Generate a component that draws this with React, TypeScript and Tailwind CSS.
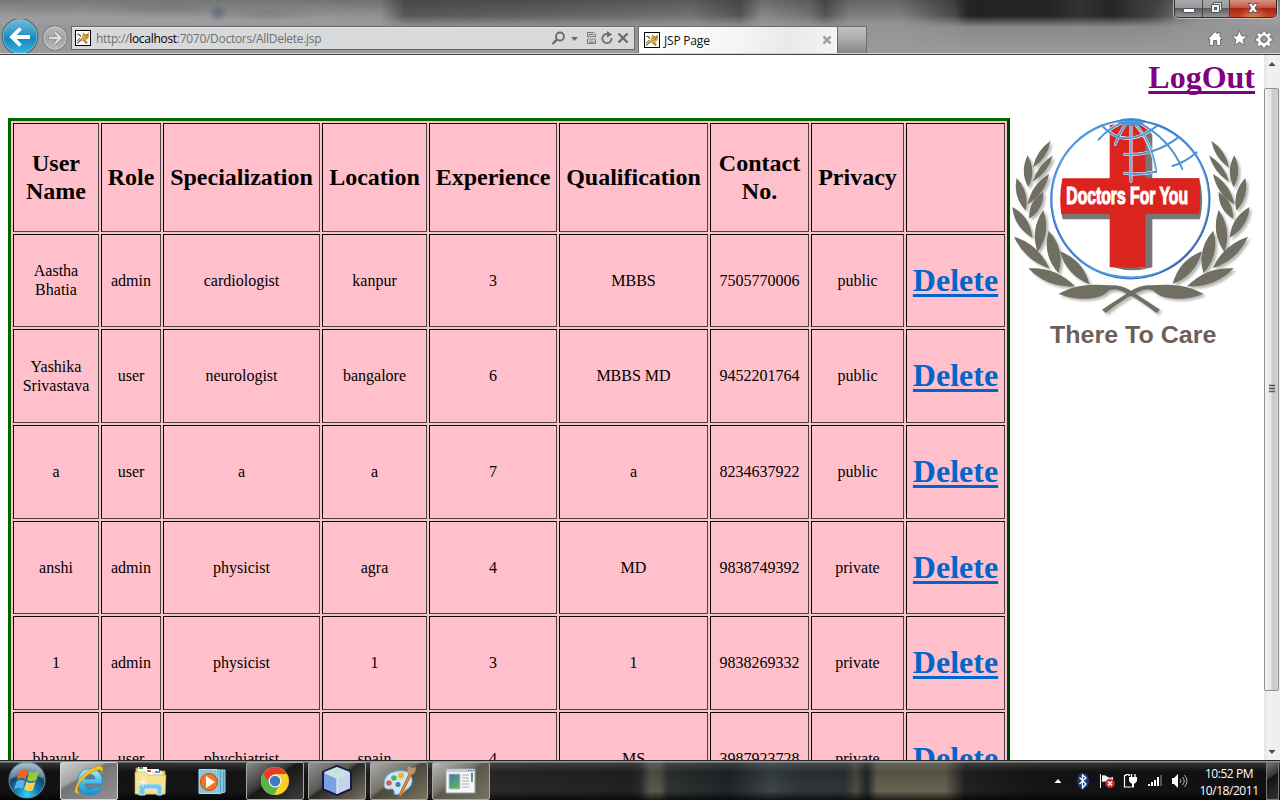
import React from "react";

const headers = ["User Name", "Role", "Specialization", "Location", "Experience", "Qualification", "Contact No.", "Privacy", ""];

const rows = [
  ["Aastha Bhatia", "admin", "cardiologist", "kanpur", "3", "MBBS", "7505770006", "public"],
  ["Yashika Srivastava", "user", "neurologist", "bangalore", "6", "MBBS MD", "9452201764", "public"],
  ["a", "user", "a", "a", "7", "a", "8234637922", "public"],
  ["anshi", "admin", "physicist", "agra", "4", "MD", "9838749392", "private"],
  ["1", "admin", "physicist", "1", "3", "1", "9838269332", "private"],
  ["bhavuk", "user", "phychiatrist", "spain", "4", "MS", "3987923728", "private"],
];

const cell = "flex items-center justify-center text-center border border-t-black border-l-black border-r-[#444] border-b-[#444]";

function TomcatIcon() {
  return (
    <svg width="16" height="16" viewBox="0 0 16 16" className="shrink-0">
      <rect x=".5" y=".5" width="15" height="15" fill="#fff" stroke="#000" />
      <path d="M7 7l1-5 2 2h2l2-2v5l-1 2-2 1 2 3-2 1-3-3H6l-3 3H2l2-4z" fill="#d3a34f" />
      <path d="M2 5l2-1 2 2M3 4l3 3M2 11l3-3M2 13l4-3M9 11l3 2" stroke="#655b4e" fill="none" strokeWidth=".9" />
      <path d="M9.500 5h1M12 5h1M11 7h1" stroke="#5f431c" />
    </svg>
  );
}

function BackButton() {
  return (
    <svg width="40" height="34" viewBox="0 0 40 34" className="shrink-0">
      <defs>
        <linearGradient id="back" x1="0" y1="0" x2="0" y2="1">
          <stop offset="0" stopColor="#77b9d6" />
          <stop offset=".42" stopColor="#2b9ccb" />
          <stop offset=".55" stopColor="#1488be" />
          <stop offset="1" stopColor="#35b5e4" />
        </linearGradient>
      </defs>
      <circle cx="20" cy="17.500" r="17.800" fill="url(#back)" stroke="#5d6468" strokeWidth="1.200" />
      <circle cx="20" cy="17.500" r="16.700" fill="none" stroke="#8cc8e0" strokeWidth=".7" />
      <path d="M30 18H12M20.500 9.500L12 18L20.500 26.500" fill="none" stroke="#fff" strokeWidth="3.800" />
    </svg>
  );
}

function ForwardButton() {
  return (
    <svg width="28" height="28" viewBox="0 0 28 28" className="mt-[1px] ml-[1px] shrink-0">
      <defs>
        <linearGradient id="fwd" x1="0" y1="0" x2="0" y2="1">
          <stop offset="0" stopColor="#bcbcbd" />
          <stop offset=".5" stopColor="#a3a3a4" />
          <stop offset="1" stopColor="#bababb" />
        </linearGradient>
      </defs>
      <circle cx="14" cy="14" r="12.300" fill="url(#fwd)" stroke="#727272" />
      <circle cx="14" cy="14" r="11.200" fill="none" stroke="#cacaca" strokeWidth=".8" />
      <path d="M7.500 14H19M14 8.500L19.500 14L14 19.500" fill="none" stroke="#828282" strokeWidth="4" />
      <path d="M8 14H19M14 8.500L19.500 14L14 19.500" fill="none" stroke="#dedede" strokeWidth="2.400" />
    </svg>
  );
}

function AddressIcons() {
  return (
    <svg width="84" height="20" viewBox="550 28 84 20" className="shrink-0">
      <g fill="none" stroke="#6b6b6b" strokeWidth="1.800">
        <circle cx="560" cy="36.500" r="4" />
        <path d="M557 39.500L552.500 44" strokeWidth="2.400" />
        <path d="M608 34A4.600 4.600 0 1 0 611.500 38" />
        <path d="M618.500 33.500L627.500 42.500M627.500 33.500L618.500 42.500" strokeWidth="2.300" />
      </g>
      <path d="M571 37h7l-3.500 4zM607 31l5 3.500-5 3z" fill="#6b6b6b" />
      <path d="M587.500 37v-4.500h6l2 2V37l-2-1-2 1-2-1zM587.500 39.500l2-1 2 1.500 2-1.500 2 1v4h-8z" fill="#cfcfcf" stroke="#747474" />
      <path d="M589 34.500h4M589 42h5" stroke="#777" />
    </svg>
  );
}

function CaptionButtons() {
  return (
    <div className="flex h-[18px] w-[103px] overflow-hidden rounded-b-[5px] border border-t-0 border-[#303030] shadow-[0_0_0_1px_rgba(220,220,220,.65)]">
      <div className="flex w-[28px] justify-center border-r border-[#444] bg-[linear-gradient(#aaa_0,#999_45%,#5b5b5b_50%,#969696)]">
        <svg width="14" height="17" viewBox="0 0 14 17"><rect x="1.500" y="8.500" width="11" height="4" rx=".5" fill="#fff" stroke="#4e5265" /></svg>
      </div>
      <div className="flex w-[27px] justify-center border-r border-[#444] bg-[linear-gradient(#aaa_0,#999_45%,#5b5b5b_50%,#969696)]">
        <svg width="14" height="17" viewBox="0 0 14 17">
          <path fillRule="evenodd" d="M4.500 2.500h8v8h-2v2h-8v-8h2z" fill="#f0f0f0" stroke="#4e5265" />
          <path d="M4.500 4.500h6v6" fill="none" stroke="#4e5265" />
          <rect x="5.500" y="7.500" width="2" height="2" fill="#858585" stroke="#4e5265" />
        </svg>
      </div>
      <div className="flex flex-1 justify-center bg-[radial-gradient(ellipse_at_50%_110%,#e0864e_0,transparent_48%),linear-gradient(#d99385_0,#c65a43_43%,#a72512_49%,#c74226)]">
        <svg width="16" height="17" viewBox="0 0 16 17">
          <path d="M3 3.500h3.500L8 5.500l1.500-2H13L9.900 8l3.100 4.500H9.500L8 10.500l-1.500 2H3L6.100 8z" fill="#fff" stroke="#4f5165" />
        </svg>
      </div>
    </div>
  );
}

function ToolbarIcons() {
  return (
    <svg width="70" height="26" viewBox="1205 26 70 26" className="shrink-0">
      <g fill="#fff" stroke="#6e6e72" strokeWidth="1">
        <path d="M1215 31.500l2.500 2.500v-1.500h2.500v4l2.700 3h-2.200v6h-3.800v-5h-3.200v5h-3.800v-6h-2.200z" />
        <path d="M1239.500 30.500l2.300 5.400 5.700.2-4.500 3.700 1.600 5.700-5.100-3.300-5.100 3.300 1.600-5.700-4.500-3.700 5.700-.2z" />
        <path fillRule="evenodd" d="M1262.500 31h3l.4 2.300 1.400.6 1.900-1.400 2 2-1.400 1.900.6 1.400 1.800.4v3l-1.800.3-.6 1.400 1.400 1.900-2 2-1.900-1.400-1.400.6-.4 2h-3l-.4-2-1.400-.6-1.900 1.400-2-2 1.400-1.900-.6-1.400-2-.3v-3l2-.3.6-1.400-1.400-1.900 2-2 1.900 1.400 1.400-.6zM1264 36a3.300 3.300 0 1 0 .01 0z" />
      </g>
    </svg>
  );
}

function BrowserChrome() {
  return (
    <header className="flex h-[55px] shrink-0 flex-col overflow-hidden border-b border-[#434343] bg-[#9a9a9b] bg-[radial-gradient(ellipse_10px_9px_at_218px_13px,rgba(70,85,120,.6),transparent),radial-gradient(ellipse_60px_9px_at_265px_13px,rgba(115,115,115,.5),transparent),radial-gradient(ellipse_80px_10px_at_165px_8px,rgba(110,110,110,.5),transparent),radial-gradient(ellipse_40px_8px_at_50px_6px,rgba(130,130,130,.4),transparent),linear-gradient(transparent_16px,rgba(148,148,152,.9)_27px,#9b9b9d_54px),linear-gradient(90deg,transparent_955px,#222_970px,#242424_1050px,#333_1080px,#262626_1110px,#3c3c3c_1145px,transparent_1175px),linear-gradient(rgba(60,60,60,.5)_0,rgba(150,150,150,.25)_24px),linear-gradient(90deg,#b0b1b4_0,#b2b2b3_150px,#a5a5a6_380px,#505050_405px,#5f5f5f_540px,#777_690px,#4c4c4c_740px,#999_762px,#777_810px,#4c4c4c_825px,#8c8c8c_850px,#8c8c8c_900px,#333_960px,#222_1040px,#3b3b3b_1140px,#959595_1200px,#b5b5b5_1280px)] font-['Open_Sans','Noto_Sans',sans-serif]">
      <div className="flex h-[19px] shrink-0 justify-end pr-[3px]">
        <CaptionButtons />
      </div>
      <div className="flex h-[35px] items-start border-b border-[#d4d4d4]">
        <div className="flex w-[71px] items-start">
          <BackButton />
          <div className="pt-[4px]"><ForwardButton /></div>
        </div>
        <div className="mt-[7px] flex h-[24px] w-[564px] items-center border border-[#68696b] bg-[#d8d9db] shadow-[inset_0_1px_#e8e8e8]">
          <div className="pl-[3px]"><TomcatIcon /></div>
          <span className="ml-[5px] pt-[2px] text-[12px] tracking-[-0.290px] whitespace-nowrap text-[#6f6f6f]">http://<span className="text-black">localhost</span>:7070/Doctors/AllDelete.jsp</span>
          <div className="ml-auto"><AddressIcons /></div>
        </div>
        <div className="mt-[7px] ml-[3px] flex h-[27px] w-[200px] items-center border border-b-0 border-[#6c6c6c] bg-[linear-gradient(105deg,#fff,#f5f5f5_50%,#e9e9e9_75%,#f5f5f5)]">
          <div className="pl-[5px]"><TomcatIcon /></div>
          <span className="ml-[4px] pt-[2px] text-[12px] tracking-[-0.200px] text-[#111]">JSP Page</span>
          <svg width="10" height="10" viewBox="0 0 10 10" className="mr-[5px] ml-auto"><path d="M1.500 1.500l7 7M8.500 1.500l-7 7" stroke="#999" strokeWidth="2.400" /></svg>
        </div>
        <div className="mt-[7px] h-[27px] w-[29px] border border-b-0 border-l-0 border-[#6c6c6c] bg-[linear-gradient(#c2c3c5,#aaa_50%,#858585)]" />
        <div className="mt-[7px] ml-auto pr-[5px]"><ToolbarIcons /></div>
      </div>
    </header>
  );
}

const leaves = [
  [152, 92, 99, 173, 24],
  [83, 136, 85, 232, 30],
  [159, 136, 99, 215, 23],
  [50, 204, 77, 302, 31],
  [147, 192, 83, 283, 29],
  [37, 291, 97, 383, 34],
  [130, 246, 87, 326, 31],
  [42, 380, 148, 475, 37],
  [130, 300, 113, 426, 38],
  [146, 362, 176, 490, 43],
  [85, 475, 225, 529, 41],
  [180, 424, 268, 522, 40],
];

function leafPath([x1, y1, x2, y2, w]: number[]) {
  const dx = x2 - x1;
  const dy = y2 - y1;
  const len = Math.hypot(dx, dy);
  const mx = (x1 + x2) / 2;
  const my = (y1 + y2) / 2;
  const nx = (-dy / len) * w * 0.85;
  const ny = (dx / len) * w * 0.85;
  return `M${x1} ${y1}Q${mx + nx} ${my + ny} ${x2} ${y2}Q${mx - nx} ${my - ny} ${x1} ${y1}Z`;
}

function LaurelHalf() {
  return (
    <g>
      {leaves.map((leaf, i) => <path key={i} d={leafPath(leaf)} />)}
      <path d="M175 552C220 525 275 521 333 526C359 525 379 533 397 545C429 564 453 581 480 599L469 609C437 584 410 565 382 552C361 540 344 535 326 542C308 561 279 567 244 566C218 566 198 559 175 552Z" />
    </g>
  );
}

function DoctorsLogo() {
  return (
    <svg width="254" height="234" viewBox="30 24 762 702" className="shrink-0" fontFamily="'Liberation Sans', Arial, sans-serif">
      <defs>
        <linearGradient id="ring" x1="0" y1="0" x2="1" y2="1">
          <stop offset="0" stopColor="#58a8ea" />
          <stop offset=".35" stopColor="#2e6fbe" />
          <stop offset=".6" stopColor="#3b87d5" />
          <stop offset="1" stopColor="#28468f" />
        </linearGradient>
        <filter id="soft"><feGaussianBlur stdDeviation="3" /></filter>
      </defs>
      <g fill="#b9b9b7" filter="url(#soft)" transform="translate(7 7)">
        <LaurelHalf />
        <g transform="translate(786 0) scale(-1 1)"><LaurelHalf /></g>
      </g>
      <g fill="#706f62">
        <LaurelHalf />
        <g transform="translate(786 0) scale(-1 1)"><LaurelHalf /></g>
      </g>
      <circle cx="391" cy="268" r="238" fill="#fff" />
      <path d="M430 46Q451 58 457 76V205H598Q614 265 600 328H457V472Q395 490 340 472H430V328H188L184 308H430Z" fill="#777673" />
      <path d="M329 46Q383 34 436 46V205H597Q604 260 597 312H436V471Q383 477 329 471V312H184Q176 260 187 205H329Z" fill="#dc241e" />
      <g fill="none" strokeLinecap="round">
        <g stroke="#fff" strokeWidth="9">
          <path d="M393 35V214M397 34Q455 90 469 186M410 34Q510 85 547 177M305 46Q375 124 474 46M374 133Q460 139 535 82M374 190Q420 195 469 185M517 168Q555 158 590 127M382 34Q360 65 346 103M374 35Q325 54 296 89" />
        </g>
        <g stroke="#4f94d0" strokeWidth="6">
          <path d="M393 35V214M397 34Q455 90 469 186M410 34Q510 85 547 177M305 46Q375 124 474 46M374 133Q460 139 535 82M374 190Q420 195 469 185M517 168Q555 158 590 127M382 34Q360 65 346 103M374 35Q325 54 296 89" />
        </g>
        <path d="M393 38V208M405 40Q451 91 467 181" stroke="#c9e8fb" strokeWidth="2" />
      </g>
      <path d="M345 34Q392 14 441 34Q402 62 345 34" fill="#4597d8" />
      <circle cx="391" cy="268" r="237" fill="none" stroke="url(#ring)" strokeWidth="7" />
      <circle cx="391" cy="268" r="235" fill="none" stroke="#9cccf4" strokeWidth="1.500" />
      <path d="M272 472Q391 538 507 474Q391 526 272 472" fill="#4d9ce0" />
      <text x="199" y="283" textLength="365" lengthAdjust="spacingAndGlyphs" fontSize="70" fontWeight="700" fill="#fff" stroke="#fff" strokeWidth="3.500">Doctors For You</text>
      <text x="150" y="698" textLength="499" lengthAdjust="spacingAndGlyphs" fontSize="73" fontWeight="700" fill="#6c5f59">There To Care</text>
    </svg>
  );
}

function Scrollbar() {
  return (
    <div className="flex w-[16px] shrink-0 flex-col bg-[linear-gradient(90deg,#e5e5e5,#f1f1f1_4px,#eee)]">
      <svg width="16" height="33" viewBox="0 0 16 33"><path d="M4.500 11L8 7l3.500 4z" fill="#444" /></svg>
      <div className="flex h-[603px] w-[15px] items-center justify-center rounded-[2px] border border-[#919194] bg-[linear-gradient(90deg,#f4f4f5,#e4e4e6_45%,#c9c9ce_60%,#d2d2d5)]">
        <svg width="8" height="10" viewBox="0 0 8 10" className="mb-[2px]"><path d="M1 1.500h6M1 4.500h6M1 7.500h6" stroke="#555" strokeWidth="1.500" /></svg>
      </div>
      <svg width="16" height="69" viewBox="0 0 16 69"><path d="M4.500 59h7L8 63z" fill="#444" /></svg>
    </div>
  );
}

function DoctorsTable() {
  return (
    <div className="grid w-[1002px] shrink-0 grid-cols-[86px_60px_157px_105px_128px_149px_99px_93px_99px] grid-rows-[109px_93px_94px_94px_93px_94px_94px] gap-[2px] border-[3px] border-t-[#006400] border-r-[#004200] border-b-[#004200] border-l-[#006400] bg-[#ffc0cb] p-[2px] text-[16px] leading-[19px]">
      {headers.map((h, i) => (
        <div key={i} className={`${cell} px-[5px] pb-[2px] text-[24px] leading-[28px] font-bold`}>{h}</div>
      ))}
      {rows.map((row, r) => (
        <React.Fragment key={r}>
          {row.map((value, c) => <div key={c} className={`${cell} px-[5px] pb-[1px]`}>{value}</div>)}
          <div className={`${cell} pb-[2px]`}>
            <a className="text-[32px] leading-[36px] font-bold text-[#0066cc] underline decoration-[3px] underline-offset-[3px] [text-decoration-skip-ink:none]">Delete</a>
          </div>
        </React.Fragment>
      ))}
    </div>
  );
}

function StartOrb() {
  return (
    <svg width="40" height="39" viewBox="0 0 40 39">
      <defs>
        <radialGradient id="orb" cx=".5" cy=".92" r=".9">
          <stop offset="0" stopColor="#27d9ff" />
          <stop offset=".35" stopColor="#167eb1" />
          <stop offset=".65" stopColor="#164768" />
          <stop offset="1" stopColor="#a1b8c6" />
        </radialGradient>
      </defs>
      <circle cx="20" cy="19" r="18" fill="url(#orb)" stroke="#718ba0" />
      <path d="M3 18Q5 3 20 3T37 17Q20 11 3 18" fill="#fff" opacity=".27" />
      <path d="M12 10.500q5-4 9-1l-2.500 9q-4-3-8.500.5z" fill="#ed652c" />
      <path d="M22.500 10q4 3 9.500 0l-2.500 9q-5 3-9.500 0z" fill="#97c83e" />
      <path d="M9.500 20.500q4-3 8.500-.5l-2.500 8q-4-2.500-8.500.5z" fill="#55b4ed" />
      <path d="M19.500 20.500q4 3 9 0l-2.500 8.500q-4 2.500-9-.5z" fill="#ffd04a" />
    </svg>
  );
}

function IEIcon() {
  return (
    <svg width="34" height="34" viewBox="0 0 34 34">
      <defs><linearGradient id="ie" x1="0" y1="0" x2="0" y2="1"><stop stopColor="#b9edff" /><stop offset=".5" stopColor="#48bff1" /><stop offset="1" stopColor="#158ecc" /></linearGradient></defs>
      <path d="M30.500 20H13q.5 5 5 5 3 0 4.500-2H30q-3 8-12 8Q6 30 5.500 18 6 5 18 4.500 31 5 30.500 20ZM13 15h10q-.5-4.500-5-4.500T13 15" fill="url(#ie)" stroke="#1984b9" strokeWidth=".7" fillRule="evenodd" />
      <path d="M8 30q-9 1-2-12Q14 5 26 2q7-1 4 8 0-5-4-4Q15 9 8 19q-5 8 0 11" fill="#f7c31d" stroke="#b98718" strokeWidth=".5" />
    </svg>
  );
}

function FolderIcon() {
  return (
    <svg width="34" height="32" viewBox="0 0 34 32">
      <path d="M3 3h10l2 3h17v23H3z" fill="#f0d581" stroke="#a78d45" />
      <path d="M5 2h9v6H5z" fill="#fff" /><path d="M6 2h4v2H6z" fill="#28ad43" />
      <path d="M12 4h14v8H12z" fill="#fff" /><path d="M14 5h4v2h-4z" fill="#e64a32" />
      <path d="M19 6h10v5H19z" fill="#eee" /><path d="M22 6h5v2h-5z" fill="#3ca3df" />
      <path d="M2 7h10l3 3h18l-1 19H2z" fill="#f5e28e" stroke="#c2aa5b" strokeWidth=".6" />
      <path d="M6 30V22q0-3 3-3h17q3 0 3 3v8h-5v-6H12v6z" fill="#7cc7e8" stroke="#bfeafa" />
      <path d="M10 12v10M5 17h10M7 14l6 6M13 14l-6 6" stroke="#fff" strokeWidth=".8" />
    </svg>
  );
}

function MediaIcon() {
  return (
    <svg width="28" height="28" viewBox="0 0 28 28">
      <path d="M10 2h17v22l-7 2z" fill="#539fbe" stroke="#a4d9ed" />
      <path d="M21 2v24M24 2v23" stroke="#c1ebf8" />
      <path d="M1 1.500h18v24H1z" fill="#87c3da" stroke="#acdff1" />
      <circle cx="11" cy="14" r="8.500" fill="#f17820" stroke="#c54c0c" />
      <path d="M8 8l9 6-9 6z" fill="#fff" />
    </svg>
  );
}

function ChromeIcon() {
  return (
    <svg width="30" height="30" viewBox="0 0 30 30">
      <circle cx="15" cy="15" r="14" fill="#ffcf27" />
      <path d="M2.900 8A14 14 0 0 1 27.100 8H15L9 18z" fill="#e63d32" />
      <path d="M2.900 8A14 14 0 0 0 14 29l6-11H10z" fill="#53b848" />
      <circle cx="15" cy="15" r="6.500" fill="#f5f5f5" /><circle cx="15" cy="15" r="5.200" fill="#357dbc" />
    </svg>
  );
}

function CubeIcon() {
  return (
    <svg width="32" height="33" viewBox="0 0 32 33">
      <path d="M16 2l14 6v17l-14 6-14-6V8z" fill="#d5e3f2" stroke="#1b174e" strokeWidth="2.200" strokeLinejoin="round" />
      <path d="M3 9l13 6v15L3 24z" fill="#7e9fe0" /><path d="M16 15l13-6v15l-13 6z" fill="#c4d4e6" />
      <path d="M3 8l13-5 13 5-13 6z" fill="#c5e2df" /><path d="M16 15v15" stroke="#eef5fb" />
    </svg>
  );
}

function PaintIcon() {
  return (
    <svg width="36" height="34" viewBox="0 0 36 34">
      <path d="M16 7Q30 5 31 15q1 7-6 11-4 6-12 4 1-5-3-5-6 1-7-3Q2 9 16 7Z" fill="#c8e8f8" stroke="#69abc9" />
      <circle cx="8" cy="19" r="2.800" fill="#e25548" /><circle cx="13" cy="14" r="2.800" fill="#52b74e" /><circle cx="20" cy="11.500" r="3" fill="#efb429" /><circle cx="17" cy="20.500" r="2.500" fill="#45798e" />
      <path d="M28 10l2 1-10 21-2 1 1-4z" fill="#ee9230" stroke="#aa5b1a" strokeWidth=".9" />
      <path d="M27 10Q25 4 28 2l3 2 4-1q0 7-5 8z" fill="#bc946d" />
    </svg>
  );
}

function WindowIcon() {
  return (
    <svg width="32" height="28" viewBox="0 0 32 28">
      <defs><linearGradient id="win" x1="0" y1="0" x2=".4" y2="1"><stop stopColor="#3f76aa" /><stop offset="1" stopColor="#60af6c" /></linearGradient></defs>
      <path d="M1 2h29v24H1z" fill="#f5f6f7" stroke="#99a3ab" /><path d="M2 3h27v2H2z" fill="#c3cdd7" />
      <path d="M23 3.500h1M25.500 3.500h1M28 3.500h1" stroke="#345b8d" />
      <path d="M4 7h11v15H4z" fill="url(#win)" stroke="#b6c5cd" /><path d="M17 8h7M17 11h7M17 14h7M17 17h7M17 20h7" stroke="#aeb0b1" /><path d="M26 6h2v9h-2z" fill="url(#win)" />
    </svg>
  );
}

const taskButton = "flex h-[38px] w-[58px] items-center justify-center rounded-[2px] border border-[#a5a5a5]";

function TrayIcons() {
  return (
    <svg width="140" height="26" viewBox="1052 768 140 26" className="shrink-0">
      <path d="M1054.500 783h7l-3.500-4z" fill="#fff" />
      <ellipse cx="1083" cy="781" rx="6" ry="8" fill="#123d78" />
      <path d="M1079.500 777.500l6.500 6.500-3.500 4v-13l3.500 3-6.500 6" fill="none" stroke="#fff" strokeWidth="1.300" />
      <path d="M1100.500 774v14" stroke="#eee" />
      <path d="M1102 775.500q3-1 5 1t6 .5v7q-4 0-6-1.500t-5-.5z" fill="#f5f5f5" />
      <circle cx="1110" cy="783.500" r="4.500" fill="#dc2b2b" stroke="#a51720" strokeWidth=".5" /><path d="M1108 781.500l4 4M1112 781.500l-4 4" stroke="#fff" strokeWidth="1.500" />
      <path d="M1130 775.500h-1v-1h-3v1h-1.500v11.500h7" fill="none" stroke="#fff" strokeWidth="1.200" />
      <path d="M1129 777h8v4l-2 2.500h-1v4h-2v-4h-1l-2-2.500z" fill="#fff" /><path d="M1131.500 774v4M1135 774v4" stroke="#fff" strokeWidth="1.300" />
      <path d="M1148 784h2v2h-2zM1151 782h2v4h-2zM1154 780h2v6h-2zM1157 777h2v9h-2z" fill="#fff" /><path d="M1160 775h2v11h-2z" fill="#555" />
      <path d="M1172 778h2l4-4v14l-4-4h-2z" fill="#fff" /><path d="M1180 779q2 2 0 4M1182.500 777q3.500 4 0 8M1184.500 775q5 6 0 12" fill="none" stroke="#ddd" strokeWidth=".8" />
    </svg>
  );
}

function Taskbar() {
  return (
    <footer className="flex h-[40px] shrink-0 items-center border-t border-[#252525] bg-[#151515] bg-[linear-gradient(rgba(190,190,190,.75)_1px,rgba(100,100,100,.4)_2px,rgba(10,10,10,.2)_11px,transparent_30px,rgba(0,0,0,.7)),linear-gradient(90deg,#121212_0,#171717_300px,#2c2a27_430px,#2b2a28_490px,#222_630px,#292b2b_640px,#5c594d_650px,#59574c_660px,#303433_668px,#202529_730px,#3c464b_770px,#30373c_800px,#303437_845px,#514e43_856px,#22272a_867px,#666351_877px,#676455_945px,#222_965px,#151515_1040px,#101010)]">
      <div className="ml-[7px] h-[39px]"><StartOrb /></div>
      <div className={`${taskButton} ml-[13px] border-[#d1d1d1] bg-[linear-gradient(150deg,#d0d0d0_0,#a2a2a2_35%,#747474_40%,#929292)]`}><IEIcon /></div>
      <div className="ml-[15px]"><FolderIcon /></div>
      <div className="ml-[31px] pt-[2px]"><MediaIcon /></div>
      <div className={`${taskButton} ml-[20px] bg-[linear-gradient(145deg,#8c8c8c_0,#373737_42%,#171717_48%,#3d3d3d)]`}><ChromeIcon /></div>
      <div className={`${taskButton} ml-[4px] bg-[linear-gradient(145deg,#939393_0,#5a5852_42%,#292929_48%,#77735f)]`}><CubeIcon /></div>
      <div className={`${taskButton} ml-[4px] bg-[linear-gradient(145deg,#aaa_0,#777368_42%,#4b493f_48%,#77735f)]`}><PaintIcon /></div>
      <div className={`${taskButton} ml-[4px] bg-[linear-gradient(145deg,#bbb_0,#777368_42%,#5b594e_48%,#77735f)]`}><WindowIcon /></div>
      <div className="ml-auto flex items-center">
        <TrayIcons />
        <div className="flex w-[74px] flex-col items-center pt-[2px] font-['Open_Sans','Noto_Sans',sans-serif] text-[12px] leading-[17px] tracking-[-0.450px] whitespace-nowrap text-white">
          <span>10:52 PM</span><span>10/18/2011</span>
        </div>
        <div className="mr-[1px] h-[38px] w-[13px] border border-[#777] bg-[linear-gradient(145deg,#777,#333_38%,#111_40%,#333)]" />
      </div>
    </footer>
  );
}

export default function App() {
  return (
    <div className="flex h-[800px] w-[1280px] flex-col overflow-hidden bg-white">
      <BrowserChrome />
      <main className="flex h-[705px] shrink-0 overflow-hidden bg-white">
        <div className="flex w-[1264px] shrink-0 flex-col overflow-hidden font-['Liberation_Serif','Times_New_Roman',serif] text-black">
          <div className="flex h-[63px] shrink-0 justify-end pt-[4px] pr-[9px]">
            <a className="text-[32px] leading-[36px] font-bold text-[#800080] underline decoration-[3px] underline-offset-[3px] [text-decoration-skip-ink:none]">LogOut</a>
          </div>
          <div className="flex items-start pl-[8px]">
            <DoctorsTable />
            <DoctorsLogo />
          </div>
        </div>
        <Scrollbar />
      </main>
      <Taskbar />
    </div>
  );
}
